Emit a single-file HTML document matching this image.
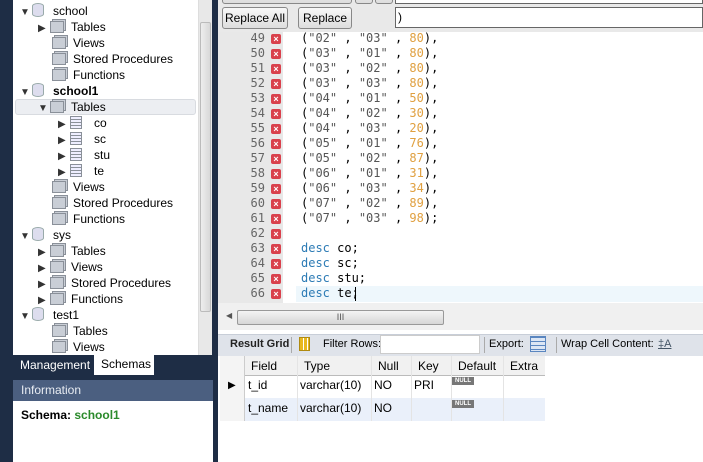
<!DOCTYPE html>
<html><head><meta charset="utf-8"><style>
*{margin:0;padding:0;box-sizing:border-box}
body{width:703px;height:462px;overflow:hidden;background:#fff;font-family:"Liberation Sans",sans-serif;font-size:12px;color:#000;position:relative}
.a{position:absolute}
.tree div{position:absolute;height:16px;line-height:16px;white-space:nowrap}
.ic{display:inline-block;width:14px;height:12px;border:1px solid #8a9099;background:#c9ced6;vertical-align:-2px;margin-right:7px;box-shadow:2px -2px 0 -1px #c9ced6,2px -2px 0 0 #8a9099}
.db{display:inline-block;width:12px;height:14px;border:1px solid #9aa;border-radius:6px/3px;background:#dde;vertical-align:-2px;margin-right:9px}
.tb{display:inline-block;width:12px;height:13px;border:1px solid #8a9099;background:repeating-linear-gradient(#eef 0 2px,#8a9099 2px 3px);vertical-align:-2px;margin-right:12px}
.tri{display:inline-block;width:12px;font-size:10px;color:#333}
.code div{position:absolute;height:15px;line-height:15px;white-space:pre;font-family:"DejaVu Sans Mono","Liberation Mono",monospace;font-size:12px}
.ln{position:absolute;width:50px;text-align:right;color:#666;font-family:"DejaVu Sans Mono",monospace;font-size:12px;line-height:15px}
.x{position:absolute;width:10px;height:10px;background:#d9414c;border-radius:2px;color:#fff;font-size:9px;line-height:10px;text-align:center;font-weight:bold}
.s{color:#555}.n{color:#e0a040}.k{color:#2d7bb5}
.btn{position:absolute;height:22px;border:1px solid #888;border-radius:3px;background:linear-gradient(#f8f8f8,#ddd);line-height:20px;text-align:center}
</style></head><body>
<div class="a" style="left:0;top:0;width:13px;height:462px;background:#1e2d45"></div>
<div class="a" style="left:211px;top:0;width:7px;height:462px;background:#1e2d45"></div>
<div class="a" style="left:198px;top:0;width:14px;height:355px;background:#e8e8e8;border-left:1px solid #ddd"></div>
<div class="a" style="left:200px;top:22px;width:11px;height:290px;background:linear-gradient(90deg,#eee,#d8d8d8);border:1px solid #bbb;border-radius:2px"></div>
<div class="tree">
<div style="left:20px;top:3px"><span class="tri">▼</span><span class="db"></span>school</div>
<div style="left:38px;top:19px"><span class="tri">▶</span><span class="ic"></span>Tables</div>
<div style="left:52px;top:35px"><span class="ic"></span>Views</div>
<div style="left:52px;top:51px"><span class="ic"></span>Stored Procedures</div>
<div style="left:52px;top:67px"><span class="ic"></span>Functions</div>
<div style="left:20px;top:83px;font-weight:bold"><span class="tri">▼</span><span class="db"></span>school1</div>
<div style="left:15px;top:99px;width:181px;background:#eceef2;border:1px solid #d8dbe0;border-radius:3px"></div>
<div style="left:38px;top:99px"><span class="tri">▼</span><span class="ic"></span>Tables</div>
<div style="left:58px;top:115px"><span class="tri">▶</span><span class="tb"></span>co</div>
<div style="left:58px;top:131px"><span class="tri">▶</span><span class="tb"></span>sc</div>
<div style="left:58px;top:147px"><span class="tri">▶</span><span class="tb"></span>stu</div>
<div style="left:58px;top:163px"><span class="tri">▶</span><span class="tb"></span>te</div>
<div style="left:52px;top:179px"><span class="ic"></span>Views</div>
<div style="left:52px;top:195px"><span class="ic"></span>Stored Procedures</div>
<div style="left:52px;top:211px"><span class="ic"></span>Functions</div>
<div style="left:20px;top:227px"><span class="tri">▼</span><span class="db"></span>sys</div>
<div style="left:38px;top:243px"><span class="tri">▶</span><span class="ic"></span>Tables</div>
<div style="left:38px;top:259px"><span class="tri">▶</span><span class="ic"></span>Views</div>
<div style="left:38px;top:275px"><span class="tri">▶</span><span class="ic"></span>Stored Procedures</div>
<div style="left:38px;top:291px"><span class="tri">▶</span><span class="ic"></span>Functions</div>
<div style="left:20px;top:307px"><span class="tri">▼</span><span class="db"></span>test1</div>
<div style="left:52px;top:323px"><span class="ic"></span>Tables</div>
<div style="left:52px;top:339px"><span class="ic"></span>Views</div>
</div>
<div class="a" style="left:13px;top:355px;width:198px;height:25px;background:#1e2d45"></div>
<div class="a" style="left:20px;top:357px;color:#fff;line-height:16px">Management</div>
<div class="a" style="left:94px;top:355px;width:60px;height:20px;background:#fff;line-height:18px;padding-left:7px">Schemas</div>
<div class="a" style="left:13px;top:380px;width:200px;height:21px;background:#4b5f80;color:#e8ecf2;line-height:20px;padding-left:8px">Information</div>
<div class="a" style="left:13px;top:401px;width:200px;height:61px;background:#fff"></div>
<div class="a" style="left:21px;top:408px;font-weight:bold">Schema: <span style="color:#2a8a2a">school1</span></div>
<div class="a" style="left:218px;top:0;width:485px;height:32px;background:#e9e9e9"></div>
<div class="btn" style="left:222px;top:-18px;width:130px"></div>
<div class="btn" style="left:355px;top:-18px;width:18px"></div>
<div class="btn" style="left:375px;top:-18px;width:18px"></div>
<div class="a" style="left:395px;top:-10px;width:308px;height:14px;background:#fff;border:1px solid #666"></div>
<div class="btn" style="left:222px;top:7px;width:66px">Replace All</div>
<div class="btn" style="left:298px;top:7px;width:54px">Replace</div>
<div class="a" style="left:395px;top:7px;width:308px;height:21px;background:#fff;border:1px solid #666;line-height:19px;padding-left:2px">)</div>
<div class="a" style="left:218px;top:32px;width:65px;height:271px;background:#e8e8e8"></div>
<div class="a" style="left:296px;top:286px;width:407px;height:16px;background:#eef7fc"></div>
<div class="a" style="left:355px;top:287px;width:1px;height:14px;background:#000"></div>
<div id="g"></div>
<div class="code" id="c"></div>
<script>
var rows=[["02","03",80],["03","01",80],["03","02",80],["03","03",80],["04","01",50],["04","02",30],["04","03",20],["05","01",76],["05","02",87],["06","01",31],["06","03",34],["07","02",89],["07","03",98]];
var h="",c="";
for(var i=0;i<18;i++){var y=31+i*15;h+='<div class="ln" style="left:215px;top:'+y+'px">'+(49+i)+'</div><div class="x" style="left:271px;top:'+(y+3)+'px">×</div>';}
rows.forEach(function(r,i){var y=31+i*15;c+='<div style="left:301px;top:'+y+'px">(<span class="s">"'+r[0]+'"</span> , <span class="s">"'+r[1]+'"</span> , <span class="n">'+r[2]+'</span>)'+(i==12?';':',')+'</div>';});
["co","sc","stu","te"].forEach(function(t,i){var y=31+(14+i)*15;c+='<div style="left:301px;top:'+y+'px"><span class="k">desc</span> '+t+';</div>';});
document.getElementById('g').innerHTML=h;document.getElementById('c').innerHTML=c;
</script>
<div class="a" style="left:218px;top:303px;width:485px;height:27px;background:#f0f0f0"></div>
<div class="a" style="left:226px;top:311px;font-size:8px;color:#555">◀</div>
<div class="a" style="left:237px;top:310px;width:207px;height:15px;background:linear-gradient(#f4f4f4,#d6d6d6);border:1px solid #999;border-radius:2px;text-align:center;font-size:9px;line-height:13px;color:#555">III</div>
<div class="a" style="left:218px;top:330px;width:485px;height:4px;background:#fff"></div>
<div class="a" style="left:218px;top:334px;width:485px;height:22px;background:#dfe3ea;border-top:1px solid #c8ced8"></div>
<div class="a" style="left:230px;top:338px;font-weight:bold;font-size:11px;color:#222">Result Grid</div>
<div class="a" style="left:291px;top:337px;width:1px;height:16px;background:#aaa"></div>
<div class="a" style="left:299px;top:337px;width:11px;height:14px;background:repeating-linear-gradient(90deg,#e8b820 0 3px,#fff 3px 4px);border:1px solid #b08a10"></div>
<div class="a" style="left:323px;top:338px;font-size:11px">Filter Rows:</div>
<div class="a" style="left:380px;top:335px;width:100px;height:19px;background:#fff;border:1px solid #ccc"></div>
<div class="a" style="left:484px;top:337px;width:1px;height:16px;background:#aaa"></div>
<div class="a" style="left:489px;top:338px;font-size:11px">Export:</div>
<div class="a" style="left:530px;top:336px;width:16px;height:16px;background:repeating-linear-gradient(#5a86c0 0 1px,#dce6f4 1px 4px);border:1px solid #5a86c0"></div>
<div class="a" style="left:556px;top:337px;width:1px;height:16px;background:#aaa"></div>
<div class="a" style="left:561px;top:338px;font-size:11px">Wrap Cell Content:</div>
<div class="a" style="left:658px;top:338px;font-size:11px;color:#456;text-decoration:underline">‡A</div>
<div class="a" style="left:218px;top:356px;width:485px;height:106px;background:#fff"></div>
<div class="a" style="left:220px;top:356px;width:25px;height:65px;background:#f4f4f4;border-right:1px solid #ccc"></div>
<div class="a" style="left:245px;top:356px;width:300px;height:20px;background:#f1f1f1;border-bottom:1px solid #bbb"></div>
<div class="a" style="left:245px;top:398px;width:300px;height:23px;background:#eaf0fa"></div>
<div class="a" style="left:228px;top:380px;font-size:10px">▶</div>
<div class="a" style="left:251px;top:359px">Field</div><div class="a" style="left:304px;top:359px">Type</div><div class="a" style="left:378px;top:359px">Null</div><div class="a" style="left:418px;top:359px">Key</div><div class="a" style="left:458px;top:359px">Default</div><div class="a" style="left:510px;top:359px">Extra</div>
<div class="a" style="left:248px;top:378px">t_id</div><div class="a" style="left:300px;top:378px">varchar(10)</div><div class="a" style="left:374px;top:378px">NO</div><div class="a" style="left:414px;top:378px">PRI</div>
<div class="a" style="left:248px;top:401px">t_name</div><div class="a" style="left:300px;top:401px">varchar(10)</div><div class="a" style="left:374px;top:401px">NO</div>
<div class="a" style="left:452px;top:377px;width:22px;height:8px;background:#777;color:#fff;font-size:6px;line-height:8px;text-align:center;font-weight:bold">NULL</div>
<div class="a" style="left:452px;top:400px;width:22px;height:8px;background:#777;color:#fff;font-size:6px;line-height:8px;text-align:center;font-weight:bold">NULL</div>
<div class="a" style="left:297px;top:356px;width:1px;height:65px;background:#e4e4e4"></div>
<div class="a" style="left:371px;top:356px;width:1px;height:65px;background:#e4e4e4"></div>
<div class="a" style="left:411px;top:356px;width:1px;height:65px;background:#e4e4e4"></div>
<div class="a" style="left:451px;top:356px;width:1px;height:65px;background:#e4e4e4"></div>
<div class="a" style="left:503px;top:356px;width:1px;height:65px;background:#e4e4e4"></div>
</body></html>
